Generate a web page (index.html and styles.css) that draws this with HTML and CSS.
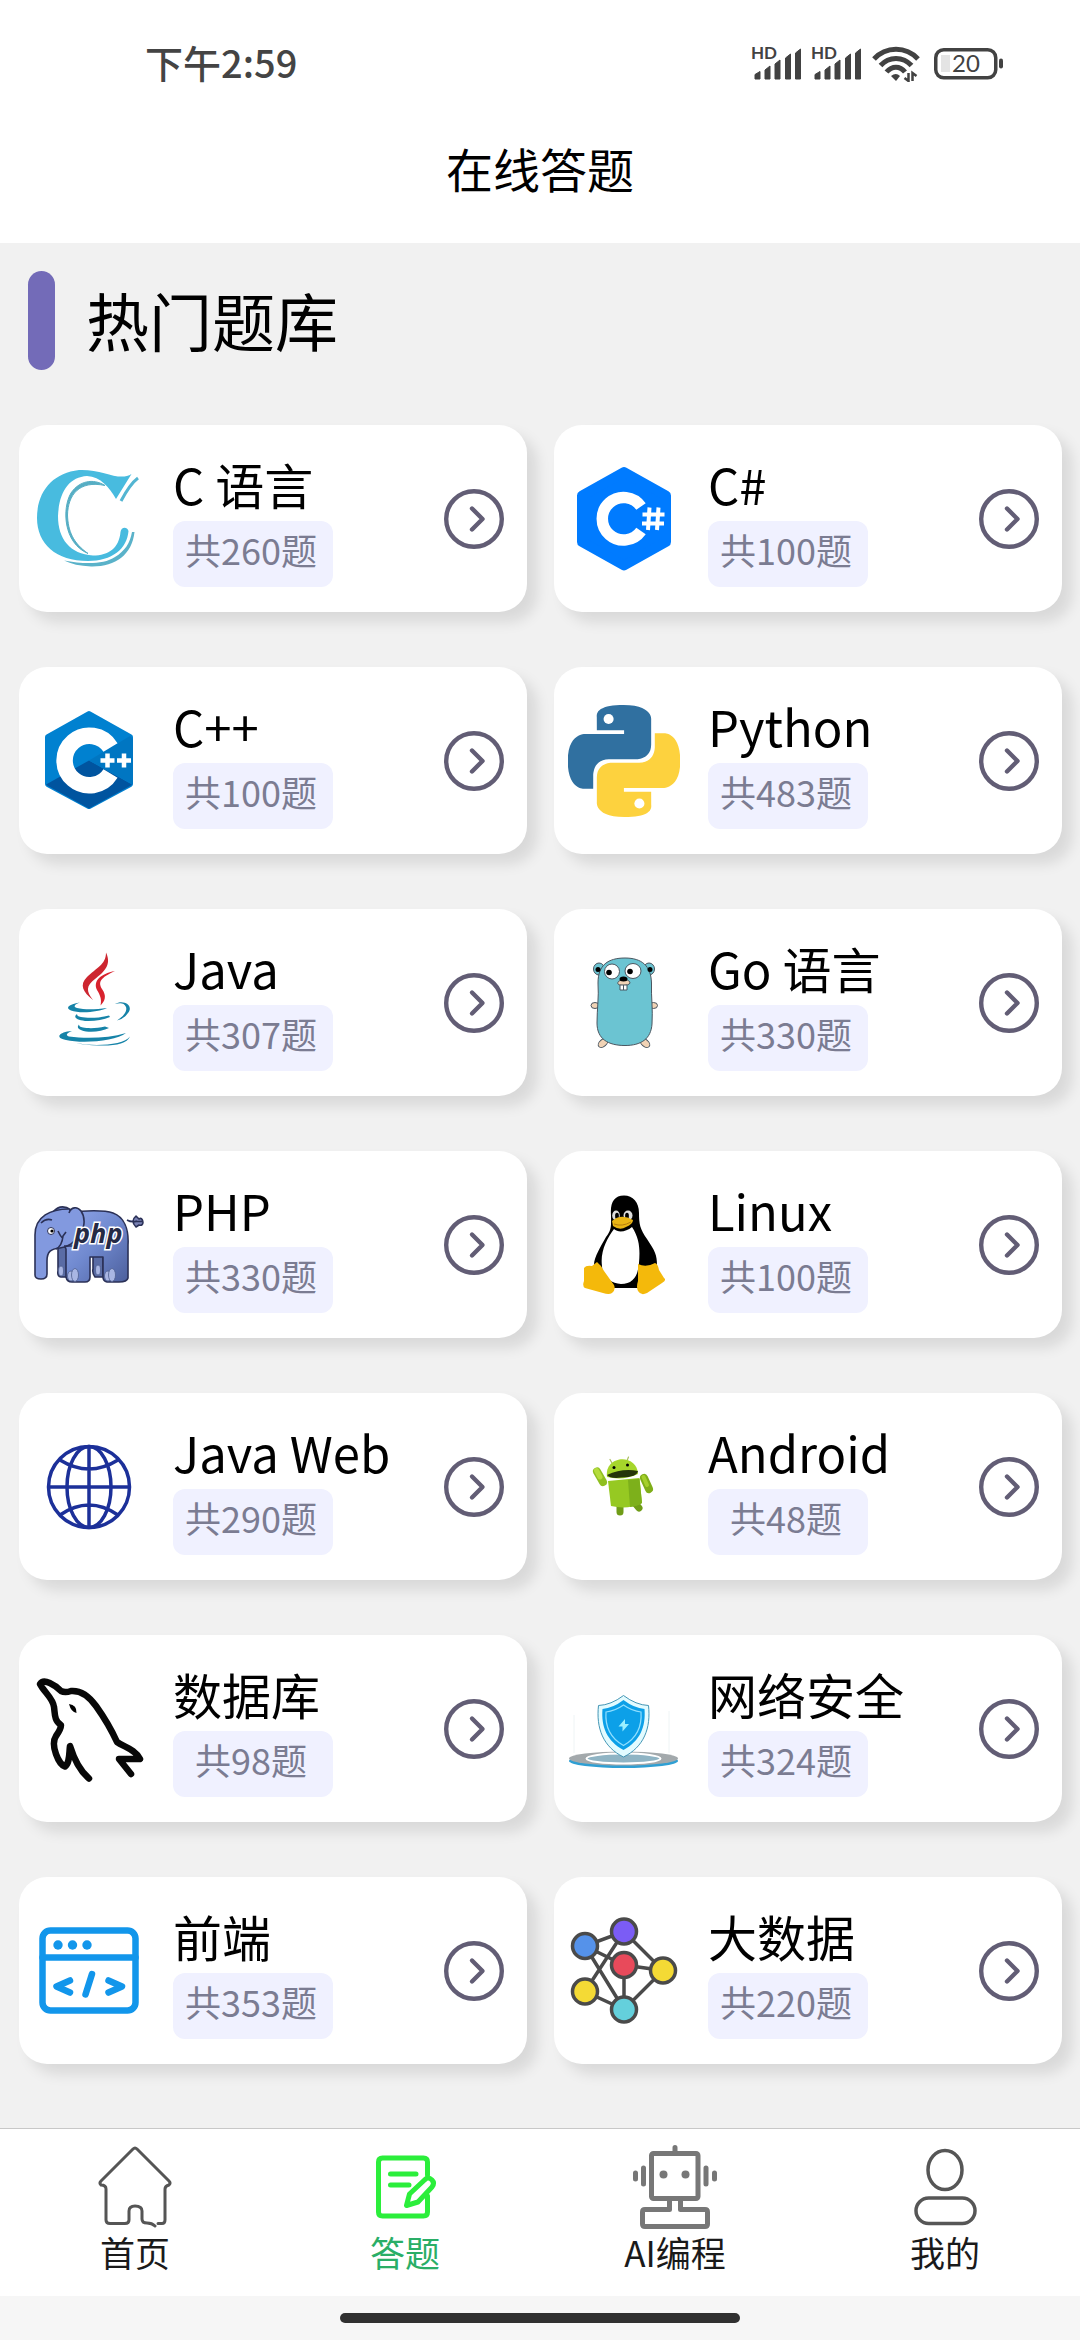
FILE: index.html
```html
<!DOCTYPE html>
<html lang="zh-CN">
<head>
  <meta charset="UTF-8">
  <meta name="viewport" content="width=device-width, initial-scale=1.0">
  <title>在线答题</title>
  <link rel="stylesheet" href="styles.css">
</head>
<body>

<!-- Shared shapes -->
<svg class="sprite" aria-hidden="true">
  <symbol id="arrow" viewBox="0 0 60 60">
    <circle cx="30" cy="30" r="27.8" fill="none" stroke="#625d75" stroke-width="4.4"/>
    <path d="M28 19.500L38.500 30L28 40.500" fill="none" stroke="#625d75" stroke-width="4.4" stroke-linecap="round" stroke-linejoin="round"/>
  </symbol>
</svg>

<div class="status-bar">
  <span class="time">下午2:59</span>
  <div class="status-icons">
    <svg class="signal" viewBox="0 0 52 36">
      <path d="M3 33v-4.500l5-3v7.500zM13 33v-9l5-4v13zM23 33v-15l5-4v19zM33.500 33v-21l5-4v25zM43.500 33v-26l5-4v30z" fill="#424242" stroke="#424242" stroke-linejoin="round"/>
      <text x="-1" y="13" class="hd-text">HD</text>
    </svg>
    <svg class="signal" viewBox="0 0 52 36">
      <path d="M3 33v-4.500l5-3v7.500zM13 33v-9l5-4v13zM23 33v-15l5-4v19zM33.500 33v-21l5-4v25zM43.500 33v-26l5-4v30z" fill="#424242" stroke="#424242" stroke-linejoin="round"/>
      <text x="-1" y="13" class="hd-text">HD</text>
    </svg>
    <svg class="wifi" viewBox="0 0 48 36">
      <g fill="none" stroke="#424242" stroke-width="5">
        <path d="M2 13C14 0 34 0 46 13"/>
        <path d="M8.500 19.500C17 10 31 10 39.500 19.500"/>
        <path d="M14.500 26C20 19.500 28 19.500 33 26"/>
      </g>
      <path d="M19 30Q24 26 28 30L24 35Z" fill="#424242"/>
      <path d="M32.500 32l4 3v-8M44.500 30l-4-3v8" fill="none" stroke="#424242" stroke-width="2.500"/>
    </svg>
    <svg class="battery" viewBox="0 0 70 32">
      <rect x="1.750" y="1.750" width="60" height="28" rx="8" fill="none" stroke="#424242" stroke-width="3.500"/>
      <rect x="7" y="7" width="9" height="17" fill="#e4e4e4"/>
      <rect x="65" y="10.500" width="4" height="10" rx="2" fill="#424242"/>
      <text x="32" y="24" class="battery-text">20</text>
    </svg>
  </div>
</div>

<header class="header">
  <h1>在线答题</h1>
</header>

<main class="content">
  <h2 class="section-title">热门题库</h2>

  <div class="card-list">
    <a class="card" href="#c">
      <svg class="logo" viewBox="0 0 112 112">
        <path d="M98.500 11C86 19 70 6 46 7C20 10 4 28 4 55C4 81 23 98 55 98C79 98 94 86 95.500 68C94 63 88 64 87.500 69C86 85 76 92.500 60 92.500C37 91 25 76 25 53C26 29 36 14 54 13C68 14 76 24 83 36Z" fill="#48bbdf"/>
        <path d="M72 22.500C60 15 46 18 38 30C29 45 30 80 55 90.500C40 80 35 68 34.500 52C35 32 46 17 72 22.500Z" fill="#56aec4" stroke="#56aec4"/>
        <path d="M105 15Q97 21 88 38" fill="none" stroke="#53b5d2" stroke-width="3"/>
        <path d="M101.500 69C99 92 82 104 58 103.500C47 103 38 101 31 97.500C50 101 70 102 82 94C92 88 97 80 99 69Z" fill="#5ab2c9"/>
      </svg>
      <div class="info"><span class="name">C 语言</span><span class="count">共260题</span></div>
      <svg class="arrow"><use href="#arrow"/></svg>
    </a>
    <a class="card" href="#csharp">
      <svg class="logo" viewBox="0 0 112 112">
        <path d="M56 9L98 32.500V79L56 102.500L14 79V32.500Z" fill="#007bff" stroke="#007bff" stroke-width="10" stroke-linejoin="round"/>
        <path d="M73 43.500A21.300 21.300 0 1 0 73 68" fill="none" stroke="#fff" stroke-width="11.500"/>
        <path d="M81.500 44.500L80 67M90.500 44.500L89 67M74.500 51.500H96.500M74 60.500H96" stroke="#fff" stroke-width="4"/>
      </svg>
      <div class="info"><span class="name">C#</span><span class="count">共100题</span></div>
      <svg class="arrow"><use href="#arrow"/></svg>
    </a>

    <a class="card" href="#cpp">
      <svg class="logo" viewBox="0 0 112 112">
        <path d="M56 9L97 32V79L56 101L15 79V32Z" fill="#0081d0" stroke="#0081d0" stroke-width="6" stroke-linejoin="round"/>
        <path d="M56 55.500L99 79.500L97 81L56 103.500L15 81L13 79.500Z" fill="#00549f"/>
        <path d="M56 55.500L99.500 79.500Q100 78 100 76V34L97 31Z" fill="#0076c2"/>
        <path d="M77.500 42.500A24.800 24.800 0 1 0 77.500 68.500" fill="none" stroke="#fff" stroke-width="16.500"/>
        <path d="M67.500 55.500H81.500M74.500 48.500V62.500M84 55.500H98M91 48.500V62.500" stroke="#fff" stroke-width="4.500"/>
      </svg>
      <div class="info"><span class="name">C++</span><span class="count">共100题</span></div>
      <svg class="arrow"><use href="#arrow"/></svg>
    </a>
    <a class="card" href="#python">
      <svg class="logo" viewBox="0 0 24 24">
        <path fill="#3070a0" d="M14.250.18l.9.2.73.26.59.3.45.32.34.34.25.34.16.33.1.3.04.26.02.2-.01.13V8.500l-.05.63-.13.55-.21.46-.26.38-.3.31-.33.25-.35.19-.35.14-.33.1-.3.07-.26.04-.21.02H8.770l-.69.05-.59.14-.5.22-.41.27-.33.32-.27.35-.2.36-.15.37-.1.35-.07.32-.04.27-.02.21v3.060H3.170l-.21-.03-.28-.07-.32-.12-.35-.18-.36-.26-.36-.36-.35-.46-.32-.59-.28-.73-.21-.88-.14-1.050-.05-1.230.06-1.220.16-1.040.24-.87.32-.71.36-.57.4-.44.42-.33.42-.24.4-.16.36-.1.32-.05.24-.01h.16l.06.01h8.160v-.83H6.180l-.01-2.750-.02-.37.05-.34.11-.31.17-.28.25-.26.31-.23.38-.2.44-.18.51-.15.58-.12.64-.1.71-.06.77-.04.84-.02 1.270.05z"/>
        <path fill="#fdd23e" d="M21.040 6.110l.28.06.32.12.35.18.36.27.36.35.35.47.32.59.28.73.21.88.14 1.040.05 1.230-.06 1.230-.16 1.040-.24.86-.32.71-.36.57-.4.45-.42.33-.42.24-.4.16-.36.09-.32.05-.24.02-.16-.01h-8.220v.82h5.840l.01 2.760.02.36-.05.34-.11.31-.17.29-.25.25-.31.24-.38.2-.44.17-.51.15-.58.13-.64.09-.71.07-.77.04-.84.01-1.270-.04-1.070-.14-.9-.2-.73-.25-.59-.3-.45-.33-.34-.34-.25-.34-.16-.33-.1-.3-.04-.25-.02-.2.01-.13v-5.340l.05-.64.13-.54.21-.46.26-.38.3-.32.33-.24.35-.2.35-.14.33-.1.3-.06.26-.04.21-.02.13-.01h5.840l.69-.05.59-.14.5-.21.41-.28.33-.32.27-.35.2-.36.15-.36.1-.35.07-.32.04-.28.02-.21V6.070h2.090l.14.01z"/>
        <circle cx="8.700" cy="3" r="1.080" fill="#fff"/>
        <circle cx="15.300" cy="21.100" r="1.080" fill="#fff"/>
      </svg>
      <div class="info"><span class="name">Python</span><span class="count">共483题</span></div>
      <svg class="arrow"><use href="#arrow"/></svg>
    </a>

    <a class="card" href="#java">
      <svg class="logo" viewBox="0 0 112 112">
        <path d="M73 5.500C79 18 71 25 62 32C53 39 53 44 60 53C50 45 46 38 54 30C63 21 73 18 73 5.500Z" fill="#cd2630"/>
        <path d="M82 24C67 31 65 35 69 42C74 49 72 54 67.500 58.500C69 52 67 48 64 43C60 34 67 27 82 24Z" fill="#d8222d"/>
        <g fill="#1683a8">
          <path d="M47 55.500C35 57.500 32 61 38 63.500C47 67 66 65 74 61C63 62.500 52 63 44 61C40 60 41 57.500 47 55.500Z"/>
          <path d="M82 57C91 52 101 59 95 66Q91 72 84 73.500Q95 66 93 60C91 55.500 87 56 82 57Z"/>
          <path d="M44 67C40 70 43 73 52 74C61 74.500 70 73 77 70L76 68.500C65 71.500 53 71 48 70C45 69.500 44 68.500 44 67Z"/>
          <path d="M46 77.500C43 81 46 83 53 84.500C61 85.500 70 84 76 81L72 79.500C64 81.500 55 81.500 50 80.500C47 80 46 79 46 77.500Z"/>
          <path d="M39 84C25 85 22 91 33 93C50 97 83 94 93 86C76 91 54 92 36 89.500C32 88 34 86 39 84Z"/>
          <path d="M43 96C62 100 91 98 97 89.500C94 97 82 99 66 98.500Q52 98 43 96Z"/>
        </g>
      </svg>
      <div class="info"><span class="name">Java</span><span class="count">共307题</span></div>
      <svg class="arrow"><use href="#arrow"/></svg>
    </a>
    <a class="card" href="#go">
      <svg class="logo" viewBox="0 0 112 112">
        <g stroke="#4b5660" stroke-width="1">
          <ellipse cx="31" cy="22" rx="5.500" ry="6" fill="#6bc4d2"/>
          <ellipse cx="81" cy="22" rx="5.500" ry="6" fill="#6bc4d2"/>
          <ellipse cx="27" cy="58.500" rx="4" ry="3" fill="#f1d3b5"/>
          <ellipse cx="85.500" cy="58.500" rx="4" ry="3" fill="#f1d3b5"/>
          <ellipse cx="35" cy="96" rx="5.500" ry="3.500" transform="rotate(-40 35 96)" fill="#f1d3b5"/>
          <ellipse cx="77" cy="96" rx="5.500" ry="3.500" transform="rotate(40 77 96)" fill="#f1d3b5"/>
          <path d="M57 11C74 11 83 19 83.500 36C83 50 85 62 84 77C83 92 73 98.500 57 98.500C40 98.500 29 92 29 76C29 62 31 50 30 36C30 18 40 11 57 11Z" fill="#6bc4d2"/>
          <ellipse cx="44" cy="24.500" rx="7.500" ry="7.500" fill="#fff"/>
          <ellipse cx="65" cy="24" rx="8" ry="7.500" fill="#fff"/>
          <path d="M50 37C48 32 62 31 62 36C61 39 51 39 50 37Z" fill="#f1d3b5"/>
          <path d="M52 38H59V43H52ZM55.500 38V43" fill="#fff"/>
        </g>
        <circle cx="30" cy="22.500" r="2.500"/><circle cx="82" cy="22.500" r="2.500"/>
        <circle cx="41" cy="25.500" r="2.800"/><circle cx="62" cy="24.500" r="2.800"/>
        <ellipse cx="55.500" cy="32" rx="4" ry="2.500"/>
      </svg>
      <div class="info"><span class="name">Go 语言</span><span class="count">共330题</span></div>
      <svg class="arrow"><use href="#arrow"/></svg>
    </a>

    <a class="card" href="#php">
      <svg class="logo" viewBox="0 0 112 112">
        <defs>
          <linearGradient id="elephant" x1="0" y1="0" x2="1" y2="1">
            <stop offset="0" stop-color="#91a7ea"/><stop offset=".5" stop-color="#7089cf"/><stop offset="1" stop-color="#4c5f9c"/>
          </linearGradient>
        </defs>
        <g stroke="#2b3157" stroke-width="1.600" stroke-linejoin="round">
          <path d="M94 31Q99 34 104 32M110 33Q109 28 106 30L103 27Q97 32 103 38L106 36Q110 37 110 33M102 32.500H109" fill="#7a82b4"/>
          <path d="M20 23Q28 14 38 21Z" fill="#7187cb"/>
          <path d="M25 58H34V88H28Q24 87 25 82Z" fill="#5a6ca5"/>
          <path d="M60 66H70V88H62Q59 84 60 80Z" fill="#5a6ca5"/>
          <path d="M40 24C50 21 72 21 80 24C91 28 96 40 95 56V89Q94 93 86 93H74Q70 92 70 88V68H57V88Q57 93 52 93H39Q34 93 33 88V60L28 50Z" fill="url(#elephant)"/>
          <path d="M36 20C18 20 2 27 2 46V86Q2 90 8 90Q14 90 14 85V72C14 62 18 60 27 59C36 58 42 53 44 48C52 42 53 29 48 22C44 17 38 18 36 24" fill="#8299df"/>
          <path d="M25 42Q30 52 30 47L33 43M30 47Q29 57 23 60M31 57H42M8 34Q13 29 19 31" fill="none"/>
        </g>
        <g fill="#a9b6e3" stroke="#4f608f" stroke-width=".8">
          <ellipse cx="38" cy="87" rx="3.500" ry="5"/><ellipse cx="42" cy="86" rx="3.500" ry="6.500"/>
          <ellipse cx="75" cy="87" rx="3.500" ry="5"/><ellipse cx="79" cy="86" rx="3.500" ry="6.500"/>
          <ellipse cx="28" cy="82" rx="2.500" ry="5"/><ellipse cx="65" cy="81" rx="2.500" ry="5"/>
        </g>
        <circle cx="18" cy="42" r="3.500" fill="#fff" stroke="#2b3157"/><circle cx="19" cy="42" r="1.600"/>
        <text x="41" y="54" class="php-text">php</text>
      </svg>
      <div class="info"><span class="name">PHP</span><span class="count">共330题</span></div>
      <svg class="arrow"><use href="#arrow"/></svg>
    </a>
    <a class="card" href="#linux">
      <svg class="logo" viewBox="0 0 112 112">
        <path d="M56 6.500C65 6.500 71 13 71 24C71 35 72 40 79 50C87 62 89 66 89 76L84 99H34L26 76C26 68 33 57 38 48C44 40 43 37 43 26C42 14 46 6.500 56 6.500Z" fill="#000"/>
        <path d="M46 40C39 49 32 63 34 77C34 89 43 94 53 95C65 95 70 87 71 74C72 62 72 50 64 38C58 43 50 44 46 40Z" fill="#fff"/>
        <ellipse cx="48" cy="26.500" rx="3.800" ry="5" fill="#ddd"/><ellipse cx="60" cy="26.500" rx="4.500" ry="5" fill="#ddd"/>
        <ellipse cx="49" cy="27" rx="1.900" ry="3.200"/><ellipse cx="59" cy="27" rx="1.900" ry="3.200"/>
        <path d="M44 32Q53 24 65 31Q65 35 58 38Q52 42 45 37Z" fill="#e9b515"/>
        <path d="M46 35Q54 38 63 33" fill="none" stroke="#b47c0c" stroke-width="1"/>
        <path d="M29 73Q33 76 36 82L46 96Q48 101 44 104Q41 106 35 104L17 99Q14 97 16 92V79Q18 76 24 77Z" fill="#f4b90b"/>
        <path d="M70 75Q78 79 87 74Q90 75 91 81L96 89Q99 91 94 94L79 104Q73 107 70 102Q68 98 70 92Z" fill="#f4b90b"/>
      </svg>
      <div class="info"><span class="name">Linux</span><span class="count">共100题</span></div>
      <svg class="arrow"><use href="#arrow"/></svg>
    </a>

    <a class="card" href="#javaweb">
      <svg class="logo" viewBox="0 0 112 112">
        <g fill="none" stroke="#1c3099" stroke-width="3.500">
          <circle cx="56" cy="56" r="40.500"/>
          <ellipse cx="56" cy="56" rx="22" ry="40.500"/>
          <path d="M56 15V97M15 56H97M27 29Q56 47 85 29M27 84Q56 64 85 84"/>
        </g>
      </svg>
      <div class="info"><span class="name">Java Web</span><span class="count">共290题</span></div>
      <svg class="arrow"><use href="#arrow"/></svg>
    </a>
    <a class="card" href="#android">
      <svg class="logo" viewBox="0 0 112 112">
        <g stroke-linecap="round">
          <path d="M29 40.500L35 51" stroke="#8fbf20" stroke-width="8"/>
          <path d="M28.500 39.500L32 46" stroke="#b5dc3c" stroke-width="5"/>
          <path d="M76 47L81 58" stroke="#7fae19" stroke-width="8"/>
          <path d="M75.500 46L79 54" stroke="#a5d02c" stroke-width="4"/>
          <path d="M52 74V81" stroke="#6f9c17" stroke-width="7"/>
          <path d="M66 71L71 77" stroke="#6f9c17" stroke-width="7"/>
          <path d="M44.500 33L42 28.500M58.500 31L60.500 26" stroke="#a9bd5c" stroke-width="1.200"/>
        </g>
        <path d="M40 50L71.500 47L74 72Q60 79 43 75Z" fill="#96c922"/>
        <path d="M60 49L71.500 48L74 72Q70 75 62 76Z" fill="#7db01b"/>
        <path d="M39 46C36 24 69 22 70 43Q55 50 39 46Z" fill="#a6d62b"/>
        <path d="M39 44Q54 37 70 40Q69 46 54 46.500Q42 48 39 44Z" fill="#26350a"/>
        <circle cx="46" cy="36.500" r="1.500"/><circle cx="59.500" cy="34" r="1.500"/>
      </svg>
      <div class="info"><span class="name">Android</span><span class="count">共48题</span></div>
      <svg class="arrow"><use href="#arrow"/></svg>
    </a>

    <a class="card" href="#database">
      <svg class="logo" viewBox="0 0 112 112">
        <path d="M56 105.500C47 98 41 86 37 73C36 80 37 90 32 93.500C26 92 17 72 23 63Q28 56 28 52C21 48 22 40 21 34C20 25 11 19 7 11C11 5 22 12 28 18Q32 20 38 18C50 17 58 26 63 33C73 47 79 58 84 69C91 74 102 76 107 86H86L98 101" fill="none" stroke="#080808" stroke-width="6.500" stroke-linecap="round" stroke-linejoin="round"/>
        <path d="M36 31Q44 32 43.500 40Q38 39 36 31Z"/>
      </svg>
      <div class="info"><span class="name">数据库</span><span class="count">共98题</span></div>
      <svg class="arrow"><use href="#arrow"/></svg>
    </a>
    <a class="card" href="#security">
      <svg class="logo" viewBox="0 0 112 112">
        <path d="M6 42V80M101 38V80" stroke="#eef4f5"/>
        <ellipse cx="55.500" cy="88" rx="54.500" ry="7" fill="#2f9fd3"/>
        <ellipse cx="55.500" cy="85.500" rx="54.500" ry="7" fill="#a3a9ac"/>
        <ellipse cx="55.500" cy="85.500" rx="37" ry="5" fill="#8fb4c4" stroke="#fff" stroke-width="2"/>
        <path d="M55.500 22.500Q68 32 80.500 32.500C83 55 76 74 55.500 84C35 74 28 55 30.500 32.500Q43 32 55.500 22.500Z" fill="#e2fbff" stroke="#4496b5"/>
        <path d="M55.500 27Q66 35 76.500 36C78 54 72 68 55.500 77C39 68 33 54 34.500 36Q45 35 55.500 27Z" fill="#0ca0e8"/>
        <path d="M55.500 32Q64 38 73 39C74 53 69 65 55.500 72.500C42 65 37 53 38 39Q47 38 55.500 32Z" fill="none" stroke="#90dfff" stroke-width="1.200"/>
        <path d="M57 46L50.500 53.500H54.500V58.500L61 51H57Z" fill="#9af0ff"/>
      </svg>
      <div class="info"><span class="name">网络安全</span><span class="count">共324题</span></div>
      <svg class="arrow"><use href="#arrow"/></svg>
    </a>

    <a class="card" href="#frontend">
      <svg class="logo" viewBox="0 0 112 112">
        <g fill="none" stroke="#1296eb" stroke-width="6.500" stroke-linecap="round" stroke-linejoin="round">
          <rect x="9.500" y="15.500" width="93" height="80" rx="8"/>
          <path d="M9.500 42.500H102.500M37 65.500L23.500 71.500L37 77.500M59 59L52.500 79.500M75.500 65.500L89 71.500L75.500 77.500"/>
        </g>
        <g fill="#1296eb">
          <circle cx="25" cy="30" r="4.700"/><circle cx="39.500" cy="30" r="4.700"/><circle cx="54" cy="30" r="4.700"/>
        </g>
      </svg>
      <div class="info"><span class="name">前端</span><span class="count">共353题</span></div>
      <svg class="arrow"><use href="#arrow"/></svg>
    </a>
    <a class="card" href="#bigdata">
      <svg class="logo" viewBox="0 0 112 112">
        <g stroke="#4a4a4a" stroke-width="3.500">
          <path d="M17 31L56 16.500L95 55.500L56 94.500L17 76.500L56 16.500M17 31L56 50L95 55.500M17 31L56 94.500V50" fill="none"/>
          <circle cx="17" cy="31" r="12.500" fill="#5592ea"/>
          <circle cx="56" cy="16.500" r="12.500" fill="#7b5cf5"/>
          <circle cx="56" cy="50" r="12.500" fill="#e84a5b"/>
          <circle cx="95" cy="55.500" r="12.500" fill="#f4da35"/>
          <circle cx="17" cy="76.500" r="12.500" fill="#f4da35"/>
          <circle cx="56" cy="94.500" r="12.500" fill="#64d0dc"/>
        </g>
      </svg>
      <div class="info"><span class="name">大数据</span><span class="count">共220题</span></div>
      <svg class="arrow"><use href="#arrow"/></svg>
    </a>
  </div>
</main>

<nav class="tab-bar">
  <a class="tab" href="#home">
    <svg class="tab-icon" viewBox="0 0 84 84">
      <path d="M65 78.500H69Q72 78.500 72 75V44Q72 41 76 40Q78 38 76 36L44 4Q42 2 40 4L8 36Q6 38 8 40Q13 40 13 44V75Q13 78.500 17 78.500H32Q36 78.500 36 75V66Q36 61 42 61Q49 61 49 66V74Q49 78 54 78Q59 78 62 81" fill="none" stroke="#555" stroke-width="3" stroke-linecap="round"/>
    </svg>
    <span>首页</span>
  </a>
  <a class="tab active" href="#answer">
    <svg class="tab-icon" viewBox="0 0 84 84">
      <g fill="none" stroke="#2bee3b" stroke-width="5" stroke-linecap="round" stroke-linejoin="round">
        <path d="M64.500 30V17Q64.500 13 60.500 13H19.500Q15.500 13 15.500 17V67Q15.500 71 19.500 71H60.500Q64.500 71 64.500 67V51M27.500 29H53M27.500 40H46"/>
        <path d="M43.500 60.500L46.500 49L61.500 35Q65 31 69 35Q72 38 69 42L55 57Z"/>
      </g>
    </svg>
    <span>答题</span>
  </a>
  <a class="tab" href="#ai">
    <svg class="tab-icon" viewBox="0 0 84 84">
      <g fill="none" stroke="#777" stroke-width="5" stroke-linecap="round" stroke-linejoin="round">
        <rect x="18.500" y="8.500" width="46.500" height="45" rx="2"/>
        <path d="M42 2.500V8M10.500 23V39M73 23V39M2.500 28V34M81.500 28V34"/>
        <path d="M36.500 54V64.500H12Q9.500 64.500 9.500 67V79Q9.500 81.500 12 81.500H72Q74.500 81.500 74.500 79V67Q74.500 64.500 72 64.500H47.500V54"/>
      </g>
      <circle cx="30.500" cy="29.500" r="4" fill="#777"/><circle cx="52.500" cy="29.500" r="4" fill="#777"/>
    </svg>
    <span>AI编程</span>
  </a>
  <a class="tab" href="#mine">
    <svg class="tab-icon" viewBox="0 0 84 84">
      <g fill="none" stroke="#565656" stroke-width="3.500">
        <ellipse cx="42" cy="25" rx="17" ry="19.500"/>
        <rect x="13" y="53" width="59" height="25.500" rx="12.700"/>
      </g>
    </svg>
    <span>我的</span>
  </a>
</nav>

<div class="gesture-bar"><div class="gesture-line"></div></div>

</body>
</html>
```
FILE: styles.css
```css
/* General Styles */
* {
  box-sizing: border-box;
}

body {
  font-family: "Noto Sans CJK SC", "Noto Sans", sans-serif;
  margin: 0;
  background: #f1f1f1;
  color: #000;
  display: flex;
  flex-direction: column;
  min-height: 100vh;
}

a {
  color: inherit;
  text-decoration: none;
}

svg {
  display: block;
  flex-shrink: 0;
}

.sprite {
  position: absolute;
  width: 0;
  height: 0;
}

/* Status bar */
.status-bar {
  display: flex;
  justify-content: space-between;
  align-items: center;
  height: 100px;
  padding: 28px 76px 0 145px;
  background: #fff;
}

.time {
  padding-bottom: 4px;
  font-size: 38px;
  line-height: 68px;
  font-weight: 500;
  color: #444;
}

.status-icons {
  display: flex;
  align-items: center;
  gap: 8px;
}

.signal {
  width: 52px;
  height: 36px;
  overflow: visible;
}

.wifi {
  width: 48px;
  height: 36px;
}

.battery {
  width: 70px;
  height: 32px;
  margin-left: 6px;
}

.hd-text {
  font-family: Lato, sans-serif;
  font-size: 17px;
  font-weight: 700;
  fill: #424242;
}

.battery-text {
  font-family: Lato, sans-serif;
  font-size: 24px;
  text-anchor: middle;
  fill: #424242;
}

/* Header */
.header {
  height: 143px;
  background: #fff;
  text-align: center;
}

h1 {
  margin: 0;
  font-size: 47px;
  line-height: 136px;
  font-weight: 400;
}

/* Question banks */
.content {
  flex: 1;
  padding: 28px 18px 64px 19px;
}

.section-title {
  display: flex;
  gap: 31px;
  margin: 0 0 55px 9px;
  font-size: 63px;
  line-height: 96px;
  font-weight: 400;
}

.section-title::before {
  content: "";
  width: 27px;
  height: 99px;
  border-radius: 14px;
  background: #736bb8;
}

.card-list {
  display: grid;
  grid-template-columns: 1fr 1fr;
  gap: 55px 27px;
}

.card {
  display: flex;
  align-items: center;
  height: 187px;
  padding: 0 23px 0 14px;
  border-radius: 28px;
  background: #fff;
  box-shadow: 10px 10px 14px rgba(0, 0, 0, 0.1);
}

.logo {
  width: 112px;
  height: 112px;
}

.info {
  flex: 1;
  display: flex;
  flex-direction: column;
  align-items: flex-start;
  margin-left: 28px;
}

.name {
  margin-bottom: 4px;
  font-size: 49px;
  line-height: 66px;
  white-space: nowrap;
}

.count {
  width: 160px;
  height: 66px;
  padding-right: 4px;
  border-radius: 12px;
  background: #f0f1ff;
  color: #7b7c92;
  font-size: 36px;
  line-height: 57px;
  text-align: center;
}

.arrow {
  width: 60px;
  height: 60px;
}

.php-text {
  font-family: "Open Sans", sans-serif;
  font-size: 27px;
  font-weight: 700;
  font-style: italic;
  fill: #252a45;
  stroke: #fff;
  stroke-width: 3px;
  paint-order: stroke;
}

/* Tab bar */
.tab-bar {
  display: flex;
  height: 168px;
  border-top: 1px solid #c8c8c8;
  background: #fff;
}

.tab {
  flex: 1;
  display: flex;
  flex-direction: column;
  align-items: center;
  padding-top: 16px;
  font-size: 35px;
  line-height: 45px;
  color: #1a1a1a;
}

.tab.active {
  color: #2aae67;
}

.tab-icon {
  width: 84px;
  height: 84px;
}

.gesture-bar {
  display: flex;
  justify-content: center;
  padding: 17px 0;
  background: #f6f6f6;
}

.gesture-line {
  width: 37%;
  height: 10px;
  border-radius: 5px;
  background: #303030;
}
```
